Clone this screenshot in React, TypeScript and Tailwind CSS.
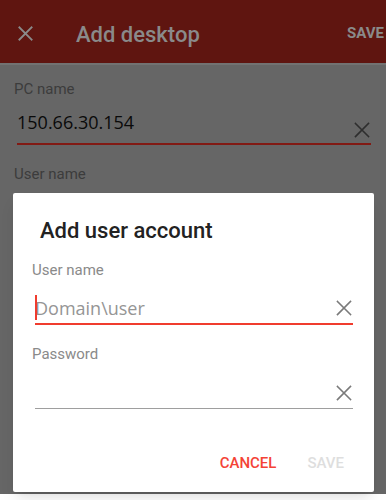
import React from 'react';

function Cross({ size = 15, color = '#7a7a7a', width = 1.6 }: { size?: number; color?: string; width?: number }) {
  return (
    <svg width={size} height={size} viewBox="0 0 16 16" fill="none">
      <path d="M1.5 1.5 L14.5 14.5 M14.5 1.5 L1.5 14.5" stroke={color} strokeWidth={width} strokeLinecap="square" />
    </svg>
  );
}

export default function App() {
  return (
    <div className="relative w-[386px] h-[500px] overflow-hidden bg-white font-[Roboto,sans-serif]">
      {/* Dimmed page behind the dialog */}
      <div className="h-[494px] bg-[#666666]">
        {/* Header */}
        <div className="flex h-[63px] bg-[#5f1510]">
          <div className="pl-[18px] pt-[26px]">
            <Cross size={15} color="#8a8a8a" width={2} />
          </div>
          <div className="pl-[43px] pt-[23px] text-[22px] leading-[24px] font-medium text-[#8a8a8a]">Add desktop</div>
          <div className="ml-auto pt-[24px] pr-[2px] text-[15px] leading-[18px] font-bold text-[#8a8a8a]">SAVE</div>
        </div>
        <div className="h-[2px] bg-[#727272]" />

        {/* Form behind */}
        <div className="pl-[14px] pt-[15px] text-[15px] leading-[18px] text-[#3c3c3c]">PC name</div>
        <div className="ml-[17px] mt-[12px] flex w-[354px] h-[35px] items-start border-b-2 border-[#821a14]">
          <div className="flex-1 text-[18px] leading-[24px] text-[#0a0a0a] font-['Open_Sans',sans-serif]">150.66.30.154</div>
          <div className="mt-[12px] mr-[1px]">
            <Cross size={16} color="#2e2e2e" />
          </div>
        </div>
        <div className="pl-[14px] pt-[20px] text-[15px] leading-[18px] text-[#3c3c3c]">User name</div>
      </div>

      {/* Dialog */}
      <div className="absolute left-[13px] top-[193px] w-[361px] h-[299px] rounded-[2px] bg-white shadow-lg">
        <div className="pl-[27px] pt-[26px] text-[22px] leading-[24px] font-medium text-[#222222]">Add user account</div>

        <div className="pl-[19px] pt-[18px] text-[15px] leading-[18px] text-[#8a8a8a]">User name</div>
        <div className="relative ml-[22px] mt-[17px] flex w-[318px] h-[29px] items-start pb-[3px] border-b-2 border-[#f03c2e]">
          <div className="absolute left-0 top-[-1px] h-[25px] w-[2px] bg-[#f03c2e]" />
          <div className="flex-1 text-[18px] leading-[24px] text-[#959595] font-['Open_Sans',sans-serif]">Domain\user</div>
          <div className="mt-[4px] mr-[1px]">
            <Cross size={16} color="#7a7a7a" />
          </div>
        </div>

        <div className="pl-[19px] pt-[20px] text-[15px] leading-[18px] text-[#8a8a8a]">Password</div>
        <div className="ml-[22px] mt-[18px] flex w-[318px] h-[28px] items-start pb-[3px] border-b border-[#9e9e9e]">
          <div className="flex-1 h-[24px]" />
          <div className="mt-[4px] mr-[1px]">
            <Cross size={16} color="#7a7a7a" />
          </div>
        </div>

        <div className="flex justify-end gap-[31px] pr-[30px] pt-[45px] text-[15px] leading-[18px] font-medium">
          <span className="text-[#f44336]">CANCEL</span>
          <span className="text-[#dedede]">SAVE</span>
        </div>
      </div>
    </div>
  );
}
